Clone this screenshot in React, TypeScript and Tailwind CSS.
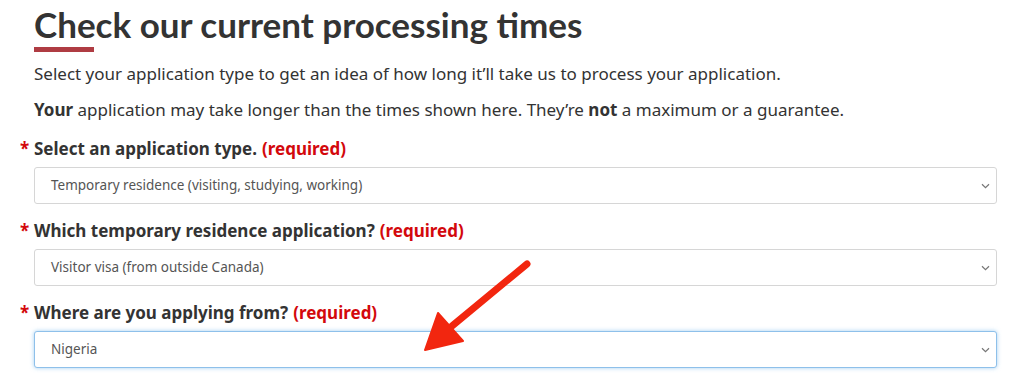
import React from "react";

const body = { fontFamily: '"Noto Sans", "Open Sans", sans-serif' };
const head = { fontFamily: 'Lato, "Noto Sans", sans-serif' };

function Chevron() {
  return (
    <svg width="9" height="6" viewBox="0 0 9 6" className="shrink-0">
      <path d="M1 1.2 L4.5 4.6 L8 1.2" fill="none" stroke="#777" strokeWidth="1.2" />
    </svg>
  );
}

function Field({ label, value, focused }: { label: string; value: string; focused?: boolean }) {
  return (
    <div>
      <div className="flex items-center -ml-[14px] h-[26px] text-[17px] font-bold text-[#333]">
        <span className="w-[14px] text-[#d3080c]">*</span>
        <span>{label}</span>
        <span className="ml-[5px] text-[#d3080c]">(required)</span>
      </div>
      <div
        className={
          "mt-[5px] h-[37px] w-[963px] flex items-center justify-between pl-[16px] pr-[6px] bg-white rounded-[3px] border " +
          (focused
            ? "border-[#8ec0ea] shadow-[0_0_4px_rgba(102,175,233,0.6)]"
            : "border-[#d6d6d6]")
        }
      >
        <span className="text-[13.5px] text-[#555]">{value}</span>
        <Chevron />
      </div>
    </div>
  );
}

export default function App() {
  return (
    <div className="relative w-[1024px] h-[383px] bg-white overflow-hidden" style={body}>
      <div className="pl-[34px]">
        <h1 className="text-[35px] leading-[48px] font-bold text-[#333]" style={head}>
          Check our current processing times
        </h1>
        <div className="w-[60px] h-[5px] bg-[#af3c43] mt-[-1px]" />

        <p className="mt-[9px] text-[17px] leading-[26px] text-[#333]">
          Select your application type to get an idea of how long it’ll take us to process your application.
        </p>
        <p className="mt-[10px] text-[17px] leading-[26px] text-[#333]">
          <strong>Your</strong> application may take longer than the times shown here. They’re{" "}
          <strong>not</strong> a maximum or a guarantee.
        </p>

        <div className="mt-[13px] flex flex-col gap-[14px]">
          <Field label="Select an application type." value="Temporary residence (visiting, studying, working)" />
          <Field label="Which temporary residence application?" value="Visitor visa (from outside Canada)" />
          <Field label="Where are you applying from?" value="Nigeria" focused />
        </div>
      </div>

      <svg className="absolute left-0 top-0 pointer-events-none" width="1024" height="383">
        <line x1="527" y1="264" x2="452" y2="326" stroke="#f2260f" strokeWidth="7" strokeLinecap="round" />
        <polygon points="425,350 438,313 463,341" fill="#f2260f" stroke="#f2260f" strokeWidth="2" strokeLinejoin="round" />
      </svg>
    </div>
  );
}
